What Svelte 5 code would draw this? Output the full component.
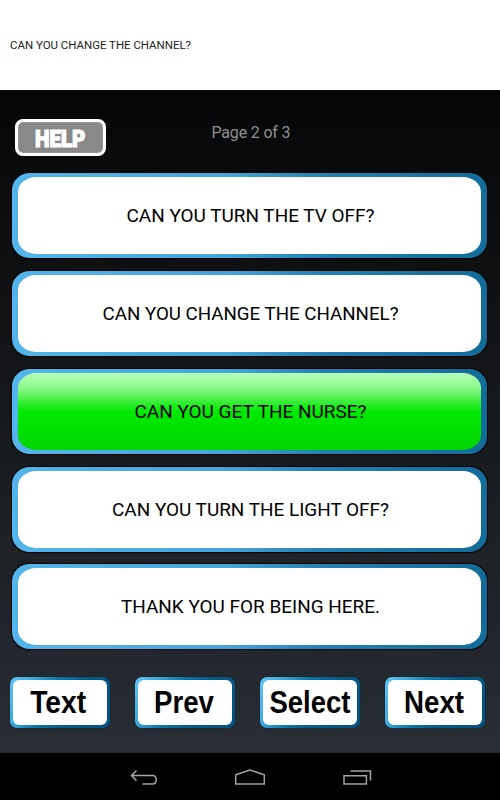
<script>
  const phrases = [
    { text: 'CAN YOU TURN THE TV OFF?', width: 248 },
    { text: 'CAN YOU CHANGE THE CHANNEL?', width: 296 },
    { text: 'CAN YOU GET THE NURSE?', width: 232, active: true },
    { text: 'CAN YOU TURN THE LIGHT OFF?', width: 277 },
    { text: 'THANK YOU FOR BEING HERE.', width: 259 }
  ];
  const actions = [
    { text: 'Text', width: 56, center: 45.2 },
    { text: 'Prev', width: 60, center: 46 },
    { text: 'Select', width: 81, center: 46.9 },
    { text: 'Next', width: 60, center: 46 }
  ];
</script>

<div class="screen">
  <header>
    <svg width="200" height="20"><text x="0" y="14" textLength="181" lengthAdjust="spacingAndGlyphs">CAN YOU CHANGE THE CHANNEL?</text></svg>
  </header>
  <main>
    <div class="top">
      <button class="help">
        <svg width="85" height="31"><text x="17" y="24.6" textLength="50.5" lengthAdjust="spacingAndGlyphs">HELP</text></svg>
      </button>
      <svg class="page" width="90" height="24"><text x="45" y="17" text-anchor="middle" textLength="79">Page 2 of 3</text></svg>
    </div>
    <div class="phrases">
      {#each phrases as p}
        <button class="phrase">
          <span class="face" class:active={p.active}>
            <svg width="463" height="77"><text x="232.5" y="45.2" text-anchor="middle" textLength={p.width} lengthAdjust="spacingAndGlyphs">{p.text}</text></svg>
          </span>
        </button>
      {/each}
    </div>
    <div class="actions">
      {#each actions as a}
        <button class="action">
          <span class="cap">
            <svg width="95" height="45"><text x={a.center} y="33" text-anchor="middle" textLength={a.width} lengthAdjust="spacingAndGlyphs">{a.text}</text></svg>
          </span>
        </button>
      {/each}
    </div>
  </main>
  <nav>
    <svg width="28" height="18" viewBox="0 0 28 18"><path d="M6.5 1.5 1.5 6.5 6.5 11.6M2 6.5H22.5Q26.2 6.5 26.2 10.7T22.5 14.9H12.5" /></svg>
    <svg width="32" height="18" viewBox="0 0 32 18"><path d="M1.7 15V5.7L16 1.1 30.3 5.7V15Z" /></svg>
    <svg width="29" height="18" viewBox="0 0 29 18"><path d="M1 6.7H23.4V15H1ZM7.5 2H27.5V11.5" /></svg>
  </nav>
</div>

<style>
  .screen {
    width: 500px;
    height: 800px;
    display: flex;
    flex-direction: column;
    background: #000;
    font-family: Roboto, 'Liberation Sans', sans-serif;
    overflow: hidden;
  }
  svg { display: block; overflow: visible; }
  button { border: 0; margin: 0; box-sizing: border-box; font: inherit; }
  header {
    height: 90px;
    box-sizing: border-box;
    padding: 35px 10px 0;
    background: #fff;
  }
  header text { font-size: 11.5px; fill: #222; }
  main {
    height: 663px;
    box-sizing: border-box;
    padding-top: 29px;
    background: linear-gradient(#050607 0%, #101214 32%, #1b1e22 62%, #292d35 100%);
  }
  .top {
    display: flex;
    height: 54.2px;
    padding-left: 15px;
  }
  .help {
    width: 91px;
    height: 37px;
    padding: 0;
    border: 3px solid #fff;
    border-radius: 8px;
    background: #898989;
    box-shadow: inset 0 0 1px #fff;
  }
  .help text {
    font: 900 24px Roboto, 'Liberation Sans', sans-serif;
    fill: #fff;
    stroke: #fff;
    stroke-width: 1.2px;
  }
  .page { margin-left: 99.5px; padding-top: 2px; }
  .page text { font-size: 16px; fill: #909090; }
  .phrases {
    display: flex;
    flex-direction: column;
    gap: 12.8px;
    padding-left: 12px;
  }
  .phrase {
    width: 475px;
    height: 85px;
    padding: 4px 6px;
    border-radius: 18px / 17px;
    background: linear-gradient(90deg, #53b5e9 0%, #46a5da 45%, #2480b5 65%, #126b99 100%);
    box-shadow: 0 0 1px 0.5px #030506;
  }
  .face {
    display: block;
    height: 77px;
    border-radius: 18px / 15px;
    background: #fff;
  }
  .face.active {
    background: linear-gradient(#b5ffb5 0%, #8af98a 20%, #35ed35 38%, #00e900 51%, #00d600 100%);
  }
  .face text { font-size: 19px; fill: #000; }
  .actions {
    display: flex;
    gap: 25px;
    padding: 28px 0 0 10px;
  }
  .action {
    width: 100px;
    height: 50.5px;
    padding: 3px 3px 2.5px 2.5px;
    border-radius: 7px;
    background: linear-gradient(115deg, #62c5f5 0%, #3cabe0 18%, #0a79ad 38%, #045b8c 60%, #05517c 100%);
    box-shadow: 0 0 1px #0a0a0a;
  }
  .cap {
    display: block;
    height: 45px;
    border-radius: 6px;
    background: #fff;
  }
  .cap text {
    font: bold 31px 'Liberation Sans', sans-serif;
    fill: #000;
  }
  nav {
    height: 47px;
    box-sizing: border-box;
    display: flex;
    padding: 16px 0 0 130px;
    background: #000;
  }
  nav svg { fill: none; stroke: #a2a2a2; stroke-width: 1.5; }
  nav svg:nth-child(1) { margin-right: 76px; }
  nav svg:nth-child(2) { margin-right: 77px; }
</style>
